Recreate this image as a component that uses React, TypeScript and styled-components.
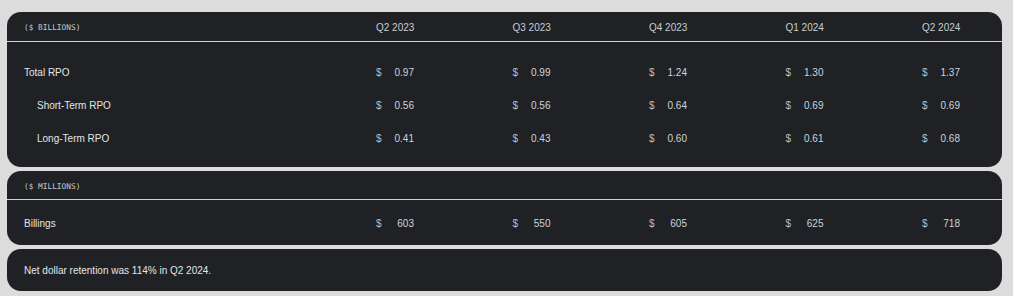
import React from "react";
import styled, { createGlobalStyle } from "styled-components";

const Global = createGlobalStyle`
  html, body { margin: 0; padding: 0; background: #dcdcdc; }
  body { font-family: "Liberation Sans", Arial, sans-serif; }
  * { box-sizing: border-box; }
`;

const Page = styled.div`
  display: flex;
  flex-direction: column;
  gap: 4px;
  padding: 12px 11px 0 7px;
`;

const Card = styled.section`
  background: #1f2124;
  border-radius: 14px;
  overflow: hidden;
`;

const Grid = styled.div`
  display: grid;
  grid-template-columns: 1fr repeat(5, 38px);
  column-gap: 98.5px;
  align-items: center;
  padding: 0 42px 0 17px;
`;

const HeadRow = styled(Grid)<{ $h: number }>`
  height: ${(p) => p.$h}px;
  padding-top: 2px;
  border-bottom: 1px solid #cfd1d3;
`;

const Unit = styled.span`
  font-family: "DejaVu Sans Mono", "Liberation Mono", monospace;
  font-size: 7.8px;
  color: #c6cbd0;
`;

const Quarter = styled.span`
  font-size: 10px;
  color: #c8ced4;
  white-space: nowrap;
`;

const Body = styled.div<{ $top: number; $bottom: number }>`
  padding: ${(p) => p.$top}px 0 ${(p) => p.$bottom}px;
`;

const Row = styled(Grid)`
  height: 33px;
`;

const Label = styled.span<{ $indent?: boolean }>`
  font-size: 10px;
  color: #e3e6e8;
  padding-left: ${(p) => (p.$indent ? 13 : 0)}px;
  white-space: nowrap;
`;

const Cell = styled.span`
  display: flex;
  justify-content: space-between;
  font-size: 10px;
  white-space: nowrap;
`;

const Dollar = styled.span`
  color: #b5bec7;
`;

const Value = styled.span`
  color: #cdd4db;
`;

const Note = styled.div`
  height: 42px;
  display: flex;
  align-items: center;
  padding: 1px 0 0 17px;
  font-size: 10px;
  color: #e3e6e8;
`;

const quarters = ["Q2 2023", "Q3 2023", "Q4 2023", "Q1 2024", "Q2 2024"];

const rpo = [
  { label: "Total RPO", indent: false, values: ["0.97", "0.99", "1.24", "1.30", "1.37"] },
  { label: "Short-Term RPO", indent: true, values: ["0.56", "0.56", "0.64", "0.69", "0.69"] },
  { label: "Long-Term RPO", indent: true, values: ["0.41", "0.43", "0.60", "0.61", "0.68"] },
];

const billings = ["603", "550", "605", "625", "718"];

const Cells = ({ values }: { values: string[] }) => (
  <>
    {values.map((v, i) => (
      <Cell key={i}>
        <Dollar>$</Dollar>
        <Value>{v}</Value>
      </Cell>
    ))}
  </>
);

export default function App() {
  return (
    <>
      <Global />
      <Page>
        <Card>
          <HeadRow $h={30}>
            <Unit>($ BILLIONS)</Unit>
            {quarters.map((q) => (
              <Quarter key={q}>{q}</Quarter>
            ))}
          </HeadRow>
          <Body $top={14} $bottom={12}>
            {rpo.map((r) => (
              <Row key={r.label}>
                <Label $indent={r.indent}>{r.label}</Label>
                <Cells values={r.values} />
              </Row>
            ))}
          </Body>
        </Card>
        <Card>
          <HeadRow $h={29}>
            <Unit>($ MILLIONS)</Unit>
          </HeadRow>
          <Body $top={7} $bottom={5}>
            <Row>
              <Label>Billings</Label>
              <Cells values={billings} />
            </Row>
          </Body>
        </Card>
        <Card>
          <Note>Net dollar retention was 114% in Q2 2024.</Note>
        </Card>
      </Page>
    </>
  );
}
